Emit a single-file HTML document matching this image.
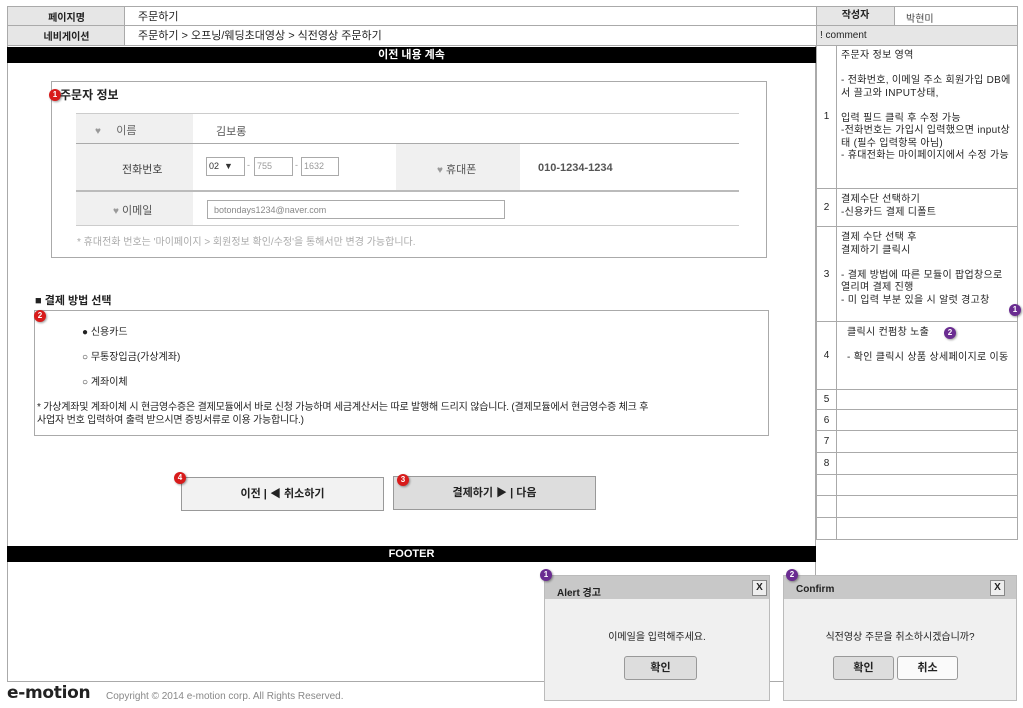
<!DOCTYPE html>
<html><head><meta charset="utf-8"><style>
*{margin:0;padding:0;box-sizing:border-box}
body{width:1023px;height:708px;background:#fff;position:relative;overflow:hidden;font-family:"Liberation Sans","Noto Sans CJK KR",sans-serif;font-size:11px;color:#222}
.a{position:absolute}
.g{background:#e6e6e6}
.b{border:1px solid #aaa}
.badge{position:absolute;width:12px;height:12px;border-radius:50%;background:#d81b1b;color:#fff;font-size:8px;font-weight:bold;text-align:center;line-height:12px;box-shadow:1px 1px 2px rgba(0,0,0,.4)}
.pb{background:#6a2c91}
.heart{color:#999;font-size:10px}
.rc{position:absolute;left:816px;width:202px;border-bottom:1px solid #aaa;border-left:1px solid #aaa;border-right:1px solid #aaa}
.rc .n{position:absolute;left:0;top:0;bottom:0;width:20px;border-right:1px solid #aaa;display:flex;align-items:center;justify-content:center;font-size:10px}
.rc .t{margin-left:24px;width:172px;font-size:10px;line-height:12.5px;padding-top:5px;letter-spacing:0.3px}
.btn{position:absolute;border:1px solid #999;border-radius:3px;background:#ddd;text-align:center;font-weight:bold;font-size:11px}
</style></head><body>
<!-- header -->
<div class="a" style="left:7px;top:6px;width:811px;height:40px;border:1px solid #aaa"></div>
<div class="a g" style="left:8px;top:7px;width:117px;height:38px;border-right:1px solid #aaa"></div>
<div class="a" style="left:8px;top:25px;width:810px;height:1px;background:#aaa"></div>
<div class="a" style="left:8px;top:9px;width:117px;text-align:center;font-weight:bold;font-size:10px">페이지명</div>
<div class="a" style="left:8px;top:28px;width:117px;text-align:center;font-weight:bold;font-size:10px">네비게이션</div>
<div class="a" style="left:138px;top:8px;font-size:11px">주문하기</div>
<div class="a" style="left:138px;top:27px;font-size:11px">주문하기 &gt; 오프닝/웨딩초대영상 &gt; 식전영상 주문하기</div>
<!-- main frame -->
<div class="a" style="left:7px;top:46px;width:809px;height:636px;border:1px solid #aaa;border-top:none"></div>
<div class="a" style="left:7px;top:47px;width:809px;height:16px;background:#000;color:#fff;text-align:center;font-weight:bold;font-size:11px;line-height:16px">이전 내용 계속</div>
<!-- order info -->
<div class="a" style="left:51px;top:81px;width:716px;height:177px;border:1px solid #aaa"></div>
<div class="badge" style="left:49px;top:89px">1</div>
<div class="a" style="left:60px;top:86px;font-weight:bold;font-size:12px">주문자 정보</div>
<div class="a" style="left:76px;top:113px;width:663px;height:1px;background:#ccc"></div>
<div class="a g" style="left:76px;top:114px;width:117px;height:77px;background:#f0f0f0"></div>
<div class="a" style="left:396px;top:143px;width:124px;height:48px;background:#f0f0f0"></div>
<div class="a" style="left:76px;top:143px;width:663px;height:1px;background:#aaa"></div>
<div class="a" style="left:76px;top:190px;width:663px;height:2px;background:#bbb"></div>
<div class="a" style="left:76px;top:192px;width:117px;height:33px;background:#f0f0f0"></div>
<div class="a" style="left:76px;top:225px;width:663px;height:1px;background:#ccc"></div>
<div class="a" style="left:95px;top:122px;color:#666"><span class="heart">♥</span>&nbsp;&nbsp;&nbsp;&nbsp;&nbsp;이름</div>
<div class="a" style="left:216px;top:123px;color:#555">김보롱</div>
<div class="a" style="left:122px;top:161px;color:#444">전화번호</div>
<div class="a b" style="left:206px;top:157px;width:39px;height:19px;font-size:9px;padding:3px 2px;color:#333">02 &nbsp;▼</div>
<div class="a" style="left:247px;top:160px;color:#999;font-size:9px">-</div>
<div class="a b" style="left:254px;top:157px;width:39px;height:19px;font-size:9px;padding:3px 2px;color:#999">755</div>
<div class="a" style="left:295px;top:160px;color:#999;font-size:9px">-</div>
<div class="a b" style="left:301px;top:157px;width:38px;height:19px;font-size:9px;padding:3px 2px;color:#999">1632</div>
<div class="a" style="left:437px;top:161px;color:#555"><span class="heart">♥</span> 휴대폰</div>
<div class="a" style="left:538px;top:162px;color:#555;font-size:11px;font-weight:bold">010-1234-1234</div>
<div class="a" style="left:113px;top:202px;color:#555"><span class="heart">♥</span> 이메일</div>
<div class="a b" style="left:207px;top:200px;width:298px;height:19px;font-size:9px;padding:4px 6px;color:#888">botondays1234@naver.com</div>
<div class="a" style="left:77px;top:233px;color:#aaa;font-size:10px">* 휴대전화 번호는 '마이페이지 &gt; 회원정보 확인/수정'을 통해서만 변경 가능합니다.</div>
<!-- payment -->
<div class="a" style="left:35px;top:292px;font-weight:bold;font-size:11px">■ 결제 방법 선택</div>
<div class="a" style="left:34px;top:310px;width:735px;height:126px;border:1px solid #aaa"></div>
<div class="badge" style="left:34px;top:310px">2</div>
<div class="a" style="left:82px;top:323px;font-size:10px">● 신용카드</div>
<div class="a" style="left:82px;top:348px;font-size:10px">○ 무통장입금(가상계좌)</div>
<div class="a" style="left:82px;top:373px;font-size:10px">○ 계좌이체</div>
<div class="a" style="left:37px;top:401px;width:730px;font-size:10px;line-height:13px;letter-spacing:-0.2px">* 가상계좌및 계좌이체 시 현금영수증은 결제모듈에서 바로 신청 가능하며 세금계산서는 따로 발행해 드리지 않습니다. (결제모듈에서 현금영수증 체크 후<br>사업자 번호 입력하여 출력 받으시면 증빙서류로 이용 가능합니다.)</div>
<div class="a" style="left:181px;top:477px;width:203px;height:34px;border:1px solid #999;background:#f2f2f2;text-align:center;line-height:32px;font-weight:bold">이전 | ◀ 취소하기</div>
<div class="badge" style="left:174px;top:472px">4</div>
<div class="a" style="left:393px;top:476px;width:203px;height:34px;border:1px solid #999;background:#ddd;text-align:center;line-height:32px;font-weight:bold">결제하기 ▶ | 다음</div>
<div class="badge" style="left:397px;top:474px">3</div>
<!-- footer -->
<div class="a" style="left:7px;top:546px;width:809px;height:16px;background:#000;color:#fff;text-align:center;font-weight:bold;font-size:11px;line-height:16px">FOOTER</div>
<div class="a" style="left:7px;top:683px;font-weight:900;font-size:17px;color:#222;font-family:'DejaVu Sans',sans-serif;letter-spacing:-0.3px">e-motion</div>
<div class="a" style="left:106px;top:691px;font-size:10px;color:#888">Copyright © 2014 e-motion corp. All Rights Reserved.</div>
<!-- right panel -->
<div class="a" style="left:816px;top:6px;width:202px;height:40px;border:1px solid #aaa"></div>
<div class="a g" style="left:817px;top:7px;width:78px;height:18px;border-right:1px solid #aaa;text-align:center;font-weight:bold;font-size:10px;line-height:18px">작성자</div>
<div class="a" style="left:906px;top:10px;font-size:10px;color:#444">박현미</div>
<div class="a g" style="left:817px;top:25px;width:200px;height:20px;border-top:1px solid #aaa;font-size:10px;line-height:19px;padding-left:3px">! comment</div>
<div class="rc" style="top:45px;height:144px"><div class="n">1</div><div class="t">주문자 정보 영역<br><br>- 전화번호, 이메일 주소 회원가입 DB에서 끌고와 INPUT상태,<br><br>입력 필드 클릭 후 수정 가능<br>-전화번호는 가입시 입력했으면 input상태 (필수 입력항목 아님)<br>- 휴대전화는 마이페이지에서 수정 가능</div></div>
<div class="rc" style="top:189px;height:38px"><div class="n">2</div><div class="t">결제수단 선택하기<br>-신용카드 결제 디폴트</div></div>
<div class="rc" style="top:227px;height:95px"><div class="n">3</div><div class="t">결제 수단 선택 후<br>결제하기 클릭시<br><br>- 결제 방법에 따른 모듈이 팝업창으로 열리며 결제 진행<br>- 미 입력 부분 있을 시 알럿 경고창</div></div>
<div class="badge pb" style="left:1009px;top:304px">1</div>
<div class="rc" style="top:322px;height:68px"><div class="n">4</div><div class="t" style="padding-left:6px">클릭시 컨펌창 노출<br><br>- 확인 클릭시 상품 상세페이지로 이동</div></div>
<div class="badge pb" style="left:944px;top:327px">2</div>
<div class="rc" style="top:390px;height:20px"><div class="n">5</div></div>
<div class="rc" style="top:410px;height:21px"><div class="n">6</div></div>
<div class="rc" style="top:431px;height:22px"><div class="n">7</div></div>
<div class="rc" style="top:453px;height:22px"><div class="n">8</div></div>
<div class="rc" style="top:475px;height:21px"><div class="n"></div></div>
<div class="rc" style="top:496px;height:22px"><div class="n"></div></div>
<div class="rc" style="top:518px;height:22px"><div class="n"></div></div>
<!-- alert -->
<div class="a" style="left:544px;top:575px;width:226px;height:126px;border:1px solid #bbb;background:#f0f0f0"></div>
<div class="a" style="left:545px;top:576px;width:224px;height:23px;background:#c8c8c8"></div>
<div class="a" style="left:557px;top:584px;font-weight:bold;font-size:10px">Alert 경고</div>
<div class="a" style="left:752px;top:580px;width:15px;height:16px;border:1px solid #888;background:#eee;font-weight:bold;font-size:10px;text-align:center;line-height:14px">X</div>
<div class="badge pb" style="left:540px;top:569px">1</div>
<div class="a" style="left:544px;top:628px;width:226px;text-align:center;font-size:10px">이메일을 입력해주세요.</div>
<div class="btn" style="left:624px;top:656px;width:73px;height:24px;line-height:22px">확인</div>
<!-- confirm -->
<div class="a" style="left:783px;top:575px;width:234px;height:126px;border:1px solid #bbb;background:#f0f0f0"></div>
<div class="a" style="left:784px;top:576px;width:232px;height:23px;background:#c8c8c8"></div>
<div class="a" style="left:796px;top:584px;font-weight:bold;font-size:10px">Confirm</div>
<div class="a" style="left:990px;top:580px;width:15px;height:16px;border:1px solid #888;background:#eee;font-weight:bold;font-size:10px;text-align:center;line-height:14px">X</div>
<div class="badge pb" style="left:786px;top:569px">2</div>
<div class="a" style="left:783px;top:628px;width:234px;text-align:center;font-size:10px">식전영상 주문을 취소하시겠습니까?</div>
<div class="btn" style="left:833px;top:656px;width:61px;height:24px;line-height:22px">확인</div>
<div class="btn" style="left:897px;top:656px;width:61px;height:24px;line-height:22px;background:#fafafa">취소</div>
</body></html>
